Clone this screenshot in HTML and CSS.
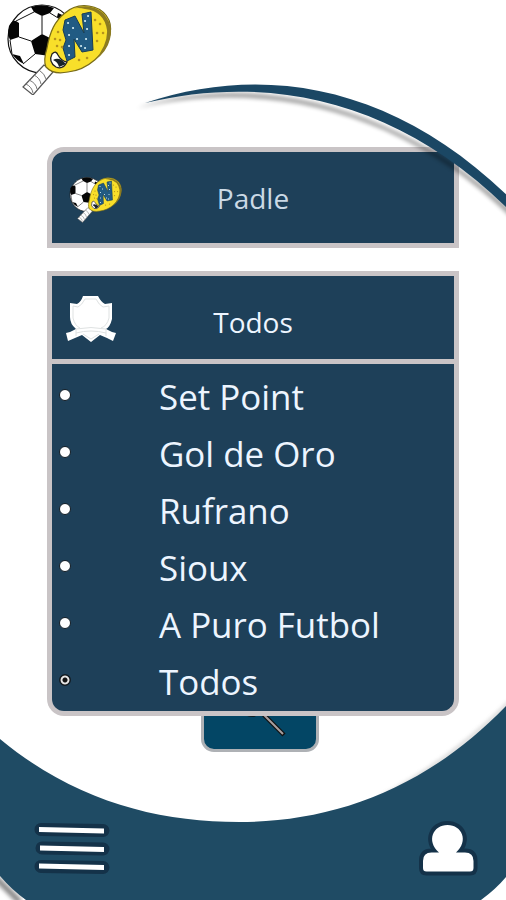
FILE: index.html
```html
<!DOCTYPE html>
<html lang="es">
<head>
<meta charset="utf-8">
<meta name="viewport" content="width=device-width, initial-scale=1">
<title>Padle</title>
<link rel="stylesheet" href="styles.css">
</head>
<body>
<svg class="defs" aria-hidden="true">
  <symbol id="logo" viewBox="0 0 108 92">
    <circle cx="36" cy="36" r="34" fill="#fff" stroke="#111" stroke-width="1.2"/>
    <path d="M25 4Q37 0 48 5L44 10 36 13 28 9ZM3 23Q6 17 10 18L13 20 13 34 4 37Q1 30 3 23ZM25 38L36 31 46 36 44 53 29 51ZM6 51L14 53 18 61Q11 58 6 51ZM52 10Q58 12 62 16L57 18 51 14Z" fill="#050505"/>
    <path d="M36 13V31M13 34L25 38M29 51L17 61M10 18L28 9M44 10L57 18M4 37L6 51" fill="none" stroke="#111"/>
    <path d="M38 62L17 84 27 92 47 69Z" fill="#fff" stroke="#555" stroke-width="1.2"/>
    <path d="M33 67Q39 71 40 76M28 72Q34 75 35 81M23 77Q30 80 31 86M20 81Q26 84 27 90" fill="none" stroke="#777"/>
    <path d="M59 10Q69 1 83 3C98 5 107 17 104 31C101 51 81 67 62 69Q47 72 40 64Q37 58 41 45C44 28 49 18 59 10Z" fill="#f8df2a" stroke="#786b18" stroke-width="1.2"/>
    <path d="M66 6Q84-1 97 10Q108 22 104 36Q101 49 88 58Q102 42 101 27Q98 8 79 6Q72 4 66 6Z" fill="#8c7b20"/>
    <path d="M59 17L69 13 78 30 76 11 85 9 87 47 76 49 68 36 69 54 61 58 57 45 60 37 57 27Z" fill="#215b83" stroke="#183c55" stroke-width="1"/>
    <path d="M62 20h.1M67 25h.1M63 32h.1M71 36h.1M63 43h.1M75 43h.1M80 36h.1M79 18h.1M81 26h.1M63 52h.1M82 13h.1M79 45h.1" stroke="#d6eff5" stroke-width="2" stroke-linecap="round"/>
    <path d="M52 29h.1M49 36h.1M54 37h.1M51 43h.1M56 44h.1M91 30h.1M94 21h.1M97 30h.1M91 38h.1M89 17h.1M81 55h.1M73 57h.1" stroke="#b6931d" stroke-width="2.5" stroke-linecap="round"/>
    <path d="M46 51Q50 47 52 52Q55 58 61 59Q57 67 50 64Q42 59 46 51Z" fill="#fff" stroke="#222" stroke-width="1.3"/>
    <path d="M47 57Q53 53 60 61L53 64Q52 59 47 57Z" fill="#17232a"/>
  </symbol>
</svg>

<div class="screen">
  <header class="header">
    <svg class="brand"><use href="#logo"/></svg>
  </header>

  <main class="content">
    <section class="card sport">
      <svg class="sport-icon"><use href="#logo"/></svg>
      <span class="value">Padle</span>
    </section>

    <section class="dropdown">
      <div class="card club">
        <svg class="club-icon" viewBox="0 0 52 48">
          <path d="M18 1H33Q36 7 40 9L47 8V24Q45 32 41 34Q46 37 51 38L48 46 42 43 35 40 26 47 17 40 10 43 3 46 1 38Q6 37 11 34Q5 29 5 22V8L12 9Q16 7 18 1Z" fill="#fff"/>
          <path d="M20 4H31Q34 10 38 12L44 11V23Q42 31 36 33M20 4Q17 10 13 12L8 11V23Q10 31 15 33M11 34Q26 31 41 34M11 34L11 41M41 34V41M11 38Q26 34 41 38M18 39L26 44 34 39" fill="none" stroke="#dfe2e2"/>
        </svg>
        <span class="value bright">Todos</span>
      </div>
      <ul class="options">
        <li class="option"><i class="dot"></i>Set Point</li>
        <li class="option"><i class="dot"></i>Gol de Oro</li>
        <li class="option"><i class="dot"></i>Rufrano</li>
        <li class="option"><i class="dot"></i>Sioux</li>
        <li class="option"><i class="dot"></i>A Puro Futbol</li>
        <li class="option"><i class="dot selected"></i>Todos</li>
      </ul>
    </section>

    <button class="search" aria-label="Buscar">
      <svg class="search-icon" viewBox="0 0 50 50">
        <circle cx="13" cy="13" r="13" fill="none" stroke="#111" stroke-width="3.5"/>
        <circle cx="13" cy="13" r="13" fill="none" stroke="#a9a0a0" stroke-width="1.5"/>
        <path d="M23 24L45 46" stroke="#111" stroke-width="4.5"/>
        <path d="M23 24L44 45" stroke="#aaa0a0" stroke-width="2"/>
      </svg>
    </button>
  </main>

  <svg class="backdrop" viewBox="0 0 506 900" aria-hidden="true">
    <defs>
      <filter id="soft" x="-10%" y="-10%" width="120%" height="120%"><feGaussianBlur stdDeviation="2"/></filter>
    </defs>
    <path d="M138 105C250 67 400 100 516 211V218C405 106 265 75 138 105Z" transform="translate(-1 3)" fill="#000" opacity=".4" filter="url(#soft)"/>
    <path d="M145 103C267 62 399 86 516 204V217C405 103 275 72 145 103Z" fill="#1b4764"/>
    <path d="M380 798Q450 762 510 702" fill="none" stroke="#777" stroke-width="3" opacity=".4" filter="url(#soft)"/>
    <path d="M-5 877L20 902" stroke="#666" stroke-width="6" opacity=".8" filter="url(#soft)"/>
    <path d="M0 739C75 801 157 822 239 822C333 822 426 789 506 706V877Q496 889 481 900H26Q12 890 0 876Z" fill="#1f4b64"/>
  </svg>

  <nav class="nav">
    <svg class="menu-icon" viewBox="0 0 80 60" aria-label="Menú">
      <g fill="none" stroke="#143249" stroke-width="13" stroke-linejoin="round" stroke-linecap="round"><path d="M9 10.5L71 11.5M10 29L71 30M9 47.5L71 48.5"/></g>
      <path d="M7 8L72 9.5V14.5L7 13ZM8 26.5L72 28V33L8 31.5ZM7 44.5L72 46V51L7 49.5Z" fill="#fff"/>
    </svg>
    <svg class="user-icon" viewBox="0 0 66 60" aria-label="Perfil">
      <path d="M24 33.5C11 22 18 6 32.500 6S54 22 41 33.500H50Q58.500 33.500 58.500 42V49Q58.500 52.500 55 52.500H11.500Q8 52.500 8 49V42Q8 33.500 16.500 33.500Z" fill="#fff" stroke="#143249" stroke-width="8" stroke-linejoin="round" paint-order="stroke"/>
    </svg>
  </nav>
</div>
</body>
</html>
```

FILE: styles.css
```css
* { box-sizing: border-box; }

body {
  margin: 0;
  background: #fff;
  font-family: "Open Sans", "Noto Sans", sans-serif;
  font-kerning: none;
}

.defs {
  position: absolute;
  width: 0;
  height: 0;
}

.screen {
  position: relative;
  display: flex;
  flex-direction: column;
  width: 506px;
  height: 900px;
  overflow: hidden;
}

.header {
  height: 147px;
  padding: 3px 0 0 6px;
}

.brand {
  display: block;
  width: 108px;
  height: 92px;
}

.content {
  display: flex;
  flex: 1;
  flex-direction: column;
  align-items: center;
}

.card {
  display: grid;
  grid-template-columns: 78px 1fr 78px;
  align-items: center;
  width: 412px;
  border: 5px solid #c9c4c6;
  background: #1e4059;
}

.sport {
  height: 101px;
  border-radius: 17px 17px 0 0;
}

.sport-icon {
  width: 54px;
  height: 47px;
  margin: 3px 0 0 17px;
}

.value {
  color: #cbd9e5;
  font-size: 28px;
  line-height: 36px;
  text-align: center;
}

.bright {
  padding-top: 9px;
  color: #edf5ff;
}

.dropdown {
  z-index: 1;
  margin-top: 23px;
}

.club { height: 93px; }

.club-icon {
  width: 52px;
  height: 48px;
  margin: 3px 0 0 13px;
}

.options {
  display: flex;
  flex-direction: column;
  width: 412px;
  height: 352px;
  margin: 0;
  padding: 4px 0 0;
  border: 5px solid #c9c4c6;
  border-top: 0;
  border-radius: 0 0 17px 17px;
  background: #1e4059;
  list-style: none;
}

.option {
  display: flex;
  align-items: center;
  gap: 88px;
  height: 57px;
  padding-left: 7px;
  color: #edf5ff;
  font-size: 34.9px;
  line-height: 57px;
  white-space: nowrap;
}

.dot {
  width: 12px;
  height: 12px;
  margin-bottom: 3px;
  border: 1.5px solid #111c25;
  border-radius: 50%;
  background: #fff;
}

.selected {
  background: radial-gradient(circle, #111 0 2px, #e5e5e5 3px 4px, #111 5px);
}

.search {
  display: flex;
  justify-content: center;
  align-items: flex-end;
  width: 118px;
  height: 80px;
  margin: -44px 0 0 14px;
  padding: 0 0 10px 8px;
  border: 3px solid #aeb1b5;
  border-radius: 13px;
  background: #034665;
}

.search-icon {
  width: 50px;
  height: 50px;
}

.backdrop {
  position: absolute;
  inset: 0;
  width: 506px;
  height: 900px;
  z-index: 2;
  pointer-events: none;
}

.nav {
  z-index: 3;
  display: flex;
  justify-content: space-between;
  height: 81px;
  padding: 0 25px 0 32px;
}

.menu-icon {
  width: 80px;
  height: 60px;
}

.user-icon {
  width: 66px;
  height: 60px;
}
```
